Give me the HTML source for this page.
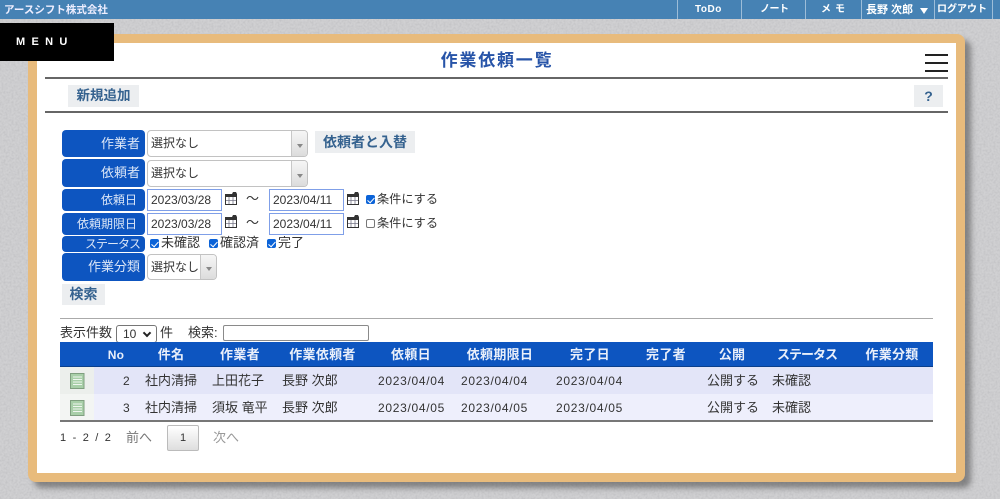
<!DOCTYPE html>
<html lang="ja"><head><meta charset="utf-8"><title>作業依頼一覧</title>
<style>
*{box-sizing:border-box}
html,body{margin:0;padding:0}
body{width:1000px;height:499px;overflow:hidden;position:relative;background:#cfcfd1;font-family:"Liberation Sans","Noto Sans CJK JP",sans-serif;font-size:12px;color:#333}
.a{position:absolute;white-space:nowrap}
#tex{position:absolute;left:0;top:0;width:1000px;height:499px}
#bar{position:absolute;left:0;top:0;width:1000px;height:19px;background:#4682b4;color:#fff;font-size:10px;line-height:20px}
.sep{position:absolute;top:0;width:1px;height:19px;background:#9dbdd8}
#card{position:absolute;left:28px;top:34px;width:937px;height:448px;background:#e8bb7c;border-radius:8px;box-shadow:6px 6px 6px rgba(70,70,70,.55)}
#inner{position:absolute;left:37px;top:43px;width:919px;height:430px;background:#fff}
#menu{position:absolute;left:0;top:23px;width:114px;height:38px;background:#000;color:#fff;font-weight:bold;font-size:11px;letter-spacing:6.3px;line-height:38px;padding-left:16px}
.hr{position:absolute;height:2px;background:#666}
.btn{position:absolute;background:#eceef0;color:#35628f;font-weight:bold;font-size:14px;text-align:center}
.lb{position:absolute;left:62px;width:83px;background:#0d55c0;color:#dbe6f7;border-radius:4px;text-align:right;padding-right:5px;font-size:13px}
.sel{position:absolute;background:#fff;border:1px solid #c2c2c2;border-radius:4px;font-size:12px;color:#333;padding-left:3px}
.sel i{position:absolute;right:0;top:0;bottom:0;width:16px;background:linear-gradient(#f6f6f6,#dcdcdc);border-left:1px solid #c8c8c8;border-radius:0 3px 3px 0}
.sel i:after{content:"";position:absolute;left:5px;top:50%;margin-top:0;border:3px solid transparent;border-top:4px solid #888;border-bottom:0}
.dt{position:absolute;width:75px;height:22px;border:1px solid #7f9fe8;background:#fff;font-size:12px;line-height:20px;padding-left:3px;color:#333}
.cb{position:absolute;width:9px;height:9px;background:#0b63d8;border-radius:2px}
.cb:after{content:"";position:absolute;left:2.5px;top:.5px;width:3px;height:6px;border:solid #fff;border-width:0 1.5px 1.5px 0;transform:rotate(42deg)}
.cb.off{background:#fff;border:1px solid #777}
.cb.off:after{display:none}
.t{position:absolute;white-space:nowrap;font-size:13px;line-height:16px;color:#333}
.th{position:absolute;top:342px;height:25px;line-height:26px;font-size:13px;font-weight:bold;color:#e9effa;text-align:center;white-space:nowrap;letter-spacing:.3px}
.r{position:absolute;white-space:nowrap;font-size:13px;line-height:16px;color:#333}
.d{letter-spacing:.7px;font-size:12px}
svg.ic{position:absolute}
</style></head><body>
<svg id="tex" xmlns="http://www.w3.org/2000/svg"><filter id="n"><feTurbulence type="fractalNoise" baseFrequency=".5" numOctaves="3" seed="4"/><feColorMatrix values="0 0 0 0 .4 0 0 0 0 .4 0 0 0 0 .42 .7 0 0 0 -.25"/></filter><rect width="1000" height="499" fill="#d0d0d2"/><rect width="1000" height="499" filter="url(#n)"/></svg>
<div id="bar"><span class="a" style="left:4px;top:0;font-size:10.5px;font-weight:bold;color:#eef">アースシフト株式会社</span>
<i class="sep" style="left:677px"></i><i class="sep" style="left:741px"></i><i class="sep" style="left:805px"></i><i class="sep" style="left:861px"></i><i class="sep" style="left:934px"></i><i class="sep" style="left:992px"></i>
<span class="a" style="left:695px;font-weight:bold;letter-spacing:.5px">ToDo</span><span class="a" style="left:760px;font-weight:bold;letter-spacing:-.5px">ノート</span><span class="a" style="left:821px;font-weight:bold;letter-spacing:4px">メモ</span><span class="a" style="left:866px;font-weight:bold;font-size:11px">長野 次郎</span><span class="a" style="left:920px;top:8px;border:4.5px solid transparent;border-top:6px solid #fff;border-bottom:0"></span><span class="a" style="left:937px;font-weight:bold">ログアウト</span></div>
<div id="card"></div><div id="inner"></div><div id="menu">MENU</div>
<div class="a" style="left:400px;width:194px;top:50px;text-align:center;font-size:17px;line-height:22px;font-weight:bold;color:#2754a8;letter-spacing:1.8px">作業依頼一覧</div>
<div class="a" style="left:925px;top:54px;width:23px;height:2px;background:#222"></div><div class="a" style="left:925px;top:62px;width:23px;height:2px;background:#222"></div><div class="a" style="left:925px;top:70px;width:23px;height:2px;background:#222"></div>
<div class="hr" style="left:45px;top:77px;width:903px"></div><div class="hr" style="left:45px;top:111px;width:903px"></div>
<div class="btn" style="left:68px;top:85px;width:71px;height:22px;line-height:22px;font-size:13.5px">新規追加</div>
<div class="btn" style="left:914px;top:85px;width:29px;height:22px;line-height:22px">?</div>
<div class="lb" style="top:130px;height:27px;line-height:27px">作業者</div>
<div class="lb" style="top:159px;height:28px;line-height:28px">依頼者</div>
<div class="lb" style="top:189px;height:22px;line-height:22px;font-size:12px;padding-right:8px">依頼日</div>
<div class="lb" style="top:213px;height:22px;line-height:22px;font-size:12px;padding-right:8px">依頼期限日</div>
<div class="lb" style="top:236px;height:16px;line-height:16px;font-size:12px;letter-spacing:-1px">ステータス</div>
<div class="lb" style="top:253px;height:28px;line-height:28px">作業分類</div>
<div class="sel" style="left:147px;top:130px;width:161px;height:27px;line-height:25px">選択なし<i></i></div>
<div class="sel" style="left:147px;top:160px;width:161px;height:27px;line-height:25px">選択なし<i></i></div>
<div class="sel" style="left:147px;top:254px;width:70px;height:26px;line-height:24px">選択なし<i></i></div>
<div class="btn" style="left:315px;top:131px;width:100px;height:22px;line-height:22px;font-size:14px">依頼者と入替</div>
<div class="dt" style="left:147px;top:189px">2023/03/28</div><div class="dt" style="left:269px;top:189px">2023/04/11</div>
<div class="dt" style="left:147px;top:213px">2023/03/28</div><div class="dt" style="left:269px;top:213px">2023/04/11</div>
<svg class="ic" style="left:224px;top:191px" width="14" height="14"><path d="M1.500 5.500h11v8h-11z" fill="#fff" stroke="#333"/><path d="M1 3h7l1-2h3l1 2v3H1z" fill="#333"/><path d="M5 6v7M9 6v7M2 9.500h10" stroke="#778" stroke-width=".8"/></svg>
<svg class="ic" style="left:346px;top:191px" width="14" height="14"><path d="M1.500 5.500h11v8h-11z" fill="#fff" stroke="#333"/><path d="M1 3h7l1-2h3l1 2v3H1z" fill="#333"/><path d="M5 6v7M9 6v7M2 9.500h10" stroke="#778" stroke-width=".8"/></svg>
<svg class="ic" style="left:224px;top:214px" width="14" height="14"><path d="M1.500 5.500h11v8h-11z" fill="#fff" stroke="#333"/><path d="M1 3h7l1-2h3l1 2v3H1z" fill="#333"/><path d="M5 6v7M9 6v7M2 9.500h10" stroke="#778" stroke-width=".8"/></svg>
<svg class="ic" style="left:346px;top:214px" width="14" height="14"><path d="M1.500 5.500h11v8h-11z" fill="#fff" stroke="#333"/><path d="M1 3h7l1-2h3l1 2v3H1z" fill="#333"/><path d="M5 6v7M9 6v7M2 9.500h10" stroke="#778" stroke-width=".8"/></svg>
<div class="t" style="left:246px;top:191px">～</div><div class="t" style="left:246px;top:215px">～</div>
<i class="cb" style="left:366px;top:195px"></i><div class="t" style="left:377px;top:191px;font-size:12.2px">条件にする</div>
<i class="cb off" style="left:366px;top:219px"></i><div class="t" style="left:377px;top:215px;font-size:12.2px">条件にする</div>
<i class="cb" style="left:150px;top:239px"></i><div class="t" style="left:161px;top:235px">未確認</div>
<i class="cb" style="left:209px;top:239px"></i><div class="t" style="left:220px;top:235px">確認済</div>
<i class="cb" style="left:267px;top:239px"></i><div class="t" style="left:278px;top:235px">完了</div>
<div class="btn" style="left:62px;top:284px;width:43px;height:21px;line-height:21px;font-size:14px">検索</div>
<div class="a" style="left:60px;top:318px;width:873px;height:1px;background:#aaa"></div>
<div class="t" style="left:60px;top:325px">表示件数</div>
<div class="a" style="left:116px;top:325px;width:41px;height:18px;border:1px solid #767676;border-radius:3px;background:#fff;font-size:12px;line-height:16px;padding-left:6px">10<span class="a" style="left:27px;top:4px;width:6px;height:6px;border:solid #222;border-width:0 2px 2px 0;transform:rotate(45deg)"></span></div>
<div class="t" style="left:160px;top:325px">件</div><div class="t" style="left:188px;top:325px">検索:</div>
<div class="a" style="left:223px;top:325px;width:146px;height:16px;border:1px solid #8a8a8a;border-radius:2px;background:#fff"></div>
<div class="a" style="left:60px;top:342px;width:873px;height:25px;background:#0d55c0;border-bottom:1px solid #0a3f8c"></div>
<div class="th" style="left:101px;width:30px;font-size:12px">No</div><div class="th" style="left:150px;width:42px">件名</div><div class="th" style="left:210px;width:60px">作業者</div><div class="th" style="left:280px;width:85px">作業依頼者</div><div class="th" style="left:385px;width:52px">依頼日</div><div class="th" style="left:460px;width:80px">依頼期限日</div><div class="th" style="left:560px;width:60px">完了日</div><div class="th" style="left:636px;width:60px">完了者</div><div class="th" style="left:702px;width:60px">公開</div><div class="th" style="left:770px;width:74px;letter-spacing:-1px">ステータス</div><div class="th" style="left:860px;width:64px">作業分類</div>
<div class="a" style="left:60px;top:367px;width:873px;height:27px;background:#e3e5f8"></div>
<div class="a" style="left:60px;top:394px;width:873px;height:27px;background:#eeeffc"></div>
<div class="a" style="left:60px;top:367px;width:34px;height:27px;background:#ecefec"></div>
<div class="a" style="left:60px;top:394px;width:34px;height:27px;background:#f3f5f3"></div>
<div class="a" style="left:60px;top:420px;width:873px;height:2px;background:#777"></div>
<svg class="ic" style="left:70px;top:373px" width="15" height="16"><rect x=".5" y=".5" width="13.500" height="15" fill="#a8cfa8" stroke="#7f9f7f"/><path d="M3 4h9M3 6.500h9M3 9h9M3 11.500h9" stroke="#eef6ee"/></svg>
<svg class="ic" style="left:70px;top:400px" width="15" height="16"><rect x=".5" y=".5" width="13.500" height="15" fill="#a8cfa8" stroke="#7f9f7f"/><path d="M3 4h9M3 6.500h9M3 9h9M3 11.500h9" stroke="#eef6ee"/></svg>
<div class="r" style="left:123px;top:373px;font-size:12px">2</div><div class="r" style="left:145px;top:373px">社内清掃</div><div class="r" style="left:212px;top:373px">上田花子</div><div class="r" style="left:282px;top:373px">長野 次郎</div><div class="r d" style="left:378px;top:373px">2023/04/04</div><div class="r d" style="left:461px;top:373px">2023/04/04</div><div class="r d" style="left:556px;top:373px">2023/04/04</div><div class="r" style="left:707px;top:373px">公開する</div><div class="r" style="left:772px;top:373px">未確認</div>
<div class="r" style="left:123px;top:400px;font-size:12px">3</div><div class="r" style="left:145px;top:400px">社内清掃</div><div class="r" style="left:212px;top:400px">須坂 竜平</div><div class="r" style="left:282px;top:400px">長野 次郎</div><div class="r d" style="left:378px;top:400px">2023/04/05</div><div class="r d" style="left:461px;top:400px">2023/04/05</div><div class="r d" style="left:556px;top:400px">2023/04/05</div><div class="r" style="left:707px;top:400px">公開する</div><div class="r" style="left:772px;top:400px">未確認</div>
<div class="t" style="left:60px;top:430px;font-size:11px;letter-spacing:1.7px">1 - 2 / 2</div>
<div class="t" style="left:126px;top:430px;color:#777">前へ</div>
<div class="a" style="left:167px;top:425px;width:32px;height:26px;border:1px solid #bbb;border-radius:2px;background:linear-gradient(#fff,#dedede);text-align:center;line-height:25px;font-size:11px;color:#333">1</div>
<div class="t" style="left:213px;top:430px;color:#999">次へ</div>
</body></html>
